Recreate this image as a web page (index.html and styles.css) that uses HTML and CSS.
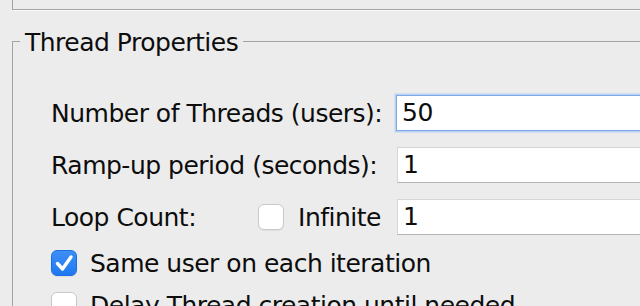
FILE: index.html
```html
<!DOCTYPE html>
<html>
<head>
<meta charset="utf-8">
<link rel="stylesheet" href="styles.css">
</head>
<body>
<div class="prev-panel"></div>
<fieldset class="group">
  <legend class="group-title">Thread Properties</legend>
  <div class="group-body">
    <div class="form">
      <label class="label">Number of Threads (users):</label>
      <div class="field focused">50</div>
      <label class="label">Ramp-up period (seconds):</label>
      <div class="field">1</div>
      <div class="label loop">
        <span>Loop Count:</span>
        <span class="inline-check"><span class="box"></span><span>Infinite</span></span>
      </div>
      <div class="field">1</div>
    </div>
    <div class="check-row">
      <span class="box checked"><svg viewBox="0 0 26 26" width="26" height="26"><path d="M6.5 13.5 L11.5 19 L20 7" fill="none" stroke="#fff" stroke-width="3.4" stroke-linecap="round" stroke-linejoin="round"/></svg></span>
      <span>Same user on each iteration</span>
    </div>
    <div class="check-row">
      <span class="box"></span>
      <span>Delay Thread creation until needed</span>
    </div>
  </div>
</fieldset>
</body>
</html>
```
FILE: styles.css
```css
html, body {
  margin: 0;
  padding: 0;
}
body {
  width: 640px;
  height: 306px;
  overflow: hidden;
  background: #ececec;
  color: #0d0d0d;
  font-family: "DejaVu Sans", "Liberation Sans", sans-serif;
  font-size: 25px;
  letter-spacing: -0.5px;
}
.prev-panel {
  margin-left: 12px;
  height: 9px;
  border-left: 1px solid #a4a4a4;
  border-bottom: 1px solid #a4a4a4;
  box-shadow: 1px 1px 0 #fbfbfb;
}
.group {
  margin: 15px 0 0 12px;
  padding: 0;
  border: 1px solid #a4a4a4;
  border-right: none;
  border-bottom: none;
  min-width: 0;
}
.group-title {
  margin-left: 7px;
  padding: 4px 5px 0;
  line-height: 28px;
}
.group-body {
  padding: 38px 0 0 38px;
}
.form {
  display: grid;
  grid-template-columns: 346px 1fr;
  row-gap: 16px;
  align-items: center;
}
.label {
  white-space: nowrap;
}
.loop {
  display: flex;
  align-items: center;
  padding-right: 16px;
}
.inline-check {
  margin-left: auto;
  display: flex;
  align-items: center;
  gap: 14px;
}
.field {
  height: 36px;
  box-sizing: border-box;
  width: 400px;
  background: #fff;
  border: 1px solid #d6d6d6;
  border-bottom-color: #b4b4b4;
  padding-left: 5px;
  line-height: 34px;
}
.field.focused {
  margin-left: -1px;
  border: 1px solid #7ea9e4;
  box-shadow: 0 0 0 1.5px #b8d2f4;
}
.box {
  width: 26px;
  height: 26px;
  box-sizing: border-box;
  flex: none;
  border-radius: 6px;
  background: #fff;
  border: 1px solid #c9c9c9;
  box-shadow: 0 1px 1px rgba(0,0,0,0.06);
  display: inline-block;
}
.box.checked {
  background: linear-gradient(#3d8ff8, #1f78f1);
  border: 1px solid #1a6fe0;
}
.box svg {
  display: block;
  margin: -1px;
}
.check-row {
  display: flex;
  align-items: center;
  gap: 13px;
  height: 26px;
  margin-top: 15px;
}
.check-row + .check-row {
  margin-top: 16px;
}
```
